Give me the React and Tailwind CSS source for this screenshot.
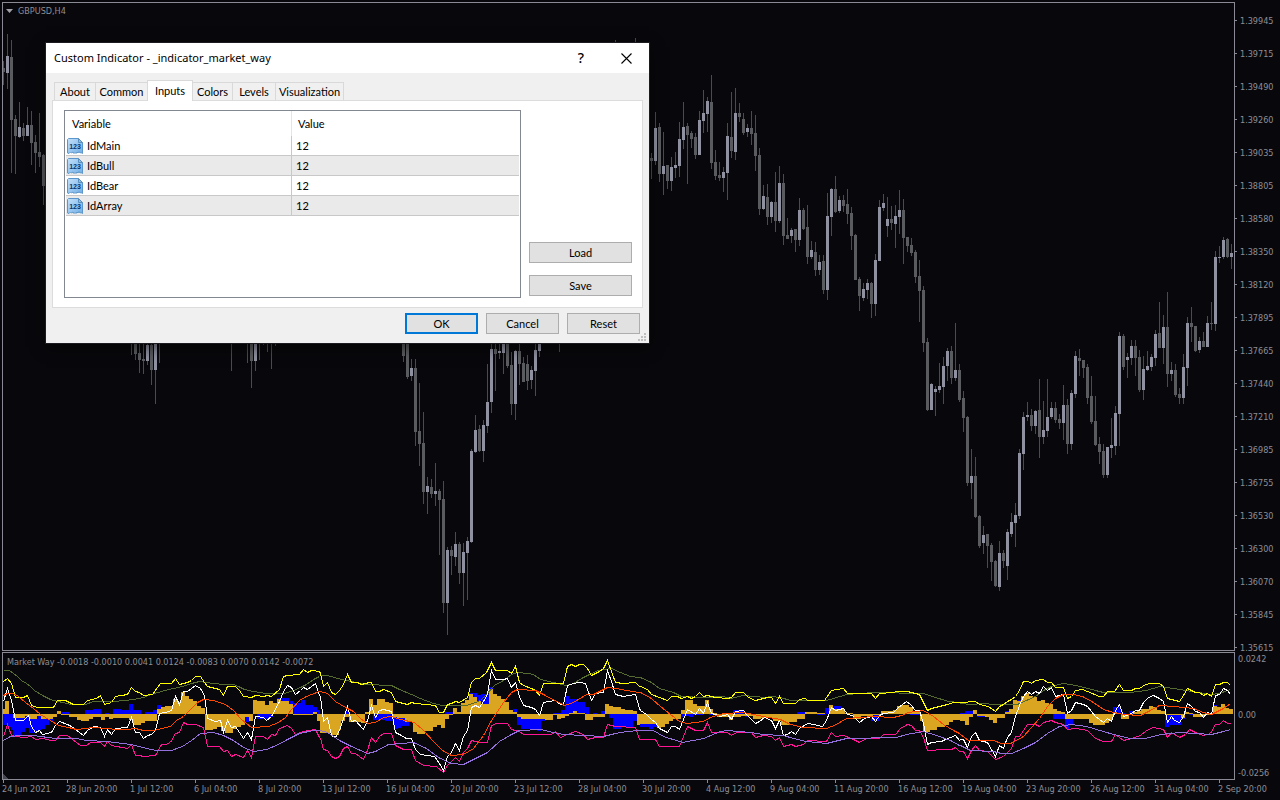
import React from "react";

/* ---------- price candles: "wickTop wickBottom bodyTop bodyBottom direction" ---------- */

const CANDLE_RUNS = [
  [0, "61 85 68 72 d,34 89 56 73 u,40 173 57 120 d,115 174 119 136 d,102 138 127 137 u,123 141 128 136 d,107 136 125 136 u,111 165 125 143 d,135 173 142 153 d,113 167 152 157 d,154 205 155 186 d"],
  [32, "320 355 320 330 d,320 360 330 354 d,340 373 353 360 d,340 374 359 361 d,330 365 345 361 u,330 385 345 370 d,330 404 340 370 u,330 363 330 340 u"],
  [57, "330 371 330 340 d"],
  [61, "330 363 330 340 d,330 388 330 361 d,330 371 335 361 u,335 360 335 344 d,330 345 330 340 d,330 352 330 340 d,330 369 330 340 d,330 346 330 340 d"],
  [100, "330 362 330 356 d,335 379 335 377 d,359 381 368 376 u,359 446 368 432 d,383 466 431 444 d,412 504 443 492 d,477 514 486 492 u,479 498 487 494 d,463 506 491 494 u,489 555 491 500 d,481 613 499 603 d,547 635 550 603 u,546 575 550 556 d,532 566 544 557 u,542 584 544 573 d,543 606 552 573 u,537 600 541 553 u,449 543 451 542 u,415 453 430 452 u,425 452 429 451 d,420 462 425 451 u,364 433 402 426 u,335 413 349 402 u,335 391 349 354 d,335 359 351 353 u,335 374 335 353 u,335 368 335 366 d,352 415 365 404 d,350 420 351 404 u,335 385 351 364 d,357 382 363 382 d,355 390 364 381 d,366 389 370 380 u,335 396 350 371 u,330 357 330 351 u"],
  [139, "330 352 330 340 d"],
  [153, "40 60 50 60 d"],
  [158, "38 60 50 60 d"],
  [162, "153 179 158 161 d,112 165 128 161 u,123 182 127 174 d,132 195 166 174 u,165 189 165 181 d,157 191 167 181 u,152 178 165 168 u,122 177 139 166 u,102 149 127 140 u,123 184 126 135 d,131 148 133 139 d,133 159 137 155 d,111 155 120 155 u,90 133 113 121 u,97 132 101 114 u,75 169 102 163 d,150 180 162 176 d,162 181 175 178 d,167 192 172 178 u,123 200 136 173 u,92 158 137 151 d,88 160 113 152 u,103 122 113 117 d,113 135 119 133 d,124 137 128 132 u,111 145 128 134 d,115 171 133 156 d,148 215 155 209 d,185 210 196 209 u,184 225 197 217 d,201 223 202 217 u,172 232 202 221 d,166 223 183 221 u,174 245 183 236 d,218 239 235 239 d,228 243 230 236 u,229 252 229 240 d,198 246 210 240 u,208 230 210 229 d,205 264 227 257 d,241 259 250 257 u,242 276 252 270 d,255 275 262 270 u,255 294 261 290 d,193 300 216 290 u,188 236 189 217 u,176 213 189 212 d,196 213 200 211 u,195 212 200 206 d,189 224 204 214 d,207 250 213 236 d,234 280 235 280 d,277 311 279 296 d,283 301 289 298 u,279 299 283 290 u,282 318 283 304 d,254 316 260 304 u,200 261 207 261 u,194 211 203 208 u,197 237 219 226 u,206 230 219 223 d,205 248 216 224 u,190 234 210 217 u,199 264 210 238 d,237 252 237 246 d,238 256 245 253 d,250 283 252 277 d,260 322 276 291 d"],
  [230, "286 352 290 343 d,338 411 342 410 d,383 410 384 410 u,386 416 389 392 u,363 393 386 390 u,357 404 366 387 u,348 381 351 366 u,346 384 351 378 d,323 381 370 378 u,364 402 370 400 d,391 432 398 418 d,416 486 417 483 d,449 499 476 483 u,457 518 476 517 d,515 548 516 546 d,526 554 535 543 u,534 568 534 546 d,543 581 545 562 d,560 587 561 586 d,541 591 553 587 u,550 568 553 561 d,529 580 532 566 u,513 537 522 534 u,503 547 515 523 u,449 519 453 516 u,412 470 417 454 u,402 421 415 417 u,409 431 415 426 d,410 434 411 426 u,379 458 410 437 d,401 444 430 437 u,379 437 417 431 u,402 419 408 417 u,402 423 408 420 d,414 429 419 423 d,385 440 405 423 u,399 454 405 444 d,390 450 393 444 u,351 398 356 394 u,349 376 358 361 d,360 378 360 368 d,364 404 367 398 d,376 424 396 422 d,396 446 421 445 d,437 464 444 452 d,444 478 451 475 d,447 478 447 475 u,418 458 445 448 u,406 455 413 446 u,332 446 336 414 u,334 370 336 367 d,353 378 357 360 u,340 365 346 358 u,340 376 346 358 d,350 392 357 390 d,356 400 369 390 u,351 371 366 370 u,354 371 357 367 u,330 366 334 358 u,302 348 333 348 d,315 364 327 348 u,292 387 327 374 d,362 381 370 374 u,364 397 370 395 d,388 404 394 398 d,354 404 367 398 u,317 386 323 368 u,307 342 323 327 d,326 352 326 351 d,337 353 341 350 u,332 347 341 347 d,316 347 323 347 u,302 330 323 324 d,251 331 257 324 u,246 263 257 258 u,237 259 240 257 u,238 258 239 257 d,244 269 253 257 u"],
];

const CANDLES = CANDLE_RUNS.flatMap(([start, run]) =>
  run.split(",").map((row, n) => {
    const [wt, wb, bt, bb, dir] = row.split(" ");
    return { x: 3 + 4 * (start + n), wt: +wt, wb: +wb, bt: +bt, bb: +bb, up: dir === "u" };
  })
);

/* ---------- oscillator: four 320-unit tiles, stored at three steps per unit ---------- */

const TOP = 650;

const LINES = [
  {
    color: "#556b2f",
    tiles: [
      "10,61 28,62 40,70 52,80 64,92 78,99 90,108 104,122 126,135 150,147 172,155 190,158 210,162 256,162 280,155 300,154 340,155 376,152 400,148 430,141 444,136 462,130 484,124 506,118 520,115 546,110 574,101 598,94 640,99 670,102 700,104 716,110 734,117 760,124 800,130 852,130 880,120 900,113 920,104 940,88 958,80",
      "0,76 22,76 64,88 110,97 140,103 214,106 238,118 274,132 300,145 340,160 366,166 440,166 466,158 480,150 500,134 524,106 550,92 574,74 592,67 622,70 640,74 662,88 700,98 740,106 760,100 784,86 808,72 836,62 874,54 900,66 930,78 958,83",
      "0,82 34,98 58,116 100,126 124,138 190,142 250,140 270,144 310,136 376,142 394,139 420,143 452,152 560,152 580,145 620,132 700,128 850,130 876,140 924,153 958,158",
      "0,160 30,163 72,160 100,164 172,162 200,152 226,138 250,122 274,110 296,102 314,100 346,106 384,114 406,121 430,127 510,127 560,120 598,110 640,116 676,122 754,134 778,130 811,118",
    ],
  },
  {
    color: "#ffff00",
    tiles: [
      "10,94 22,85 34,100 46,141 70,143 82,136 94,166 112,172 160,171 172,152 196,152 220,162 250,163 262,150 288,146 300,137 312,163 334,158 346,140 382,134 394,112 406,123 418,127 430,137 458,132 480,101 514,101 526,86 538,104 562,98 574,90 586,79 600,80 612,98 622,110 658,118 670,136 682,110 706,109 718,122 730,138 754,142 766,136 790,140 802,136 814,138 838,118 850,80 862,76 898,74 910,59 922,67 934,62 958,63",
      "0,70 10,108 22,98 34,126 46,133 58,122 70,104 82,74 94,98 112,96 124,103 148,98 154,98 166,123 178,124 190,118 214,128 226,155 250,160 262,164 274,156 286,161 346,166 358,186 370,186 382,164 394,160 406,154 418,157 442,142 454,96 466,85 478,84 500,66 514,36 526,60 562,61 574,70 586,48 598,96 610,106 634,114 646,120 658,136 670,101 730,99 742,48 754,44 766,48 778,44 790,44 802,54 814,76 838,64 850,54 862,30 874,64 886,98 910,100 946,97 958,108",
      "0,108 22,118 34,134 58,142 82,150 94,140 112,139 124,146 142,138 154,144 166,140 178,128 190,140 202,136 226,142 262,144 274,142 286,127 310,127 326,142 346,151 382,143 394,142 406,160 418,140 430,160 466,160 478,148 496,144 502,150 552,150 574,120 610,115 622,130 694,131 706,145 718,130 756,128 772,124 802,124 838,133 862,180 874,174 898,168 922,162 940,158 958,157",
      "0,158 46,154 58,162 84,168 106,184 118,168 130,164 142,155 154,148 166,140 178,120 190,94 206,93 214,100 226,92 250,89 262,97 274,96 286,112 310,112 322,145 334,140 346,120 366,118 382,125 418,138 430,139 442,124 464,124 478,104 490,122 514,120 526,115 538,116 556,104 574,100 598,101 610,110 622,146 658,153 670,136 682,116 706,126 718,128 730,136 742,130 754,138 766,104 778,104 790,97 802,98 811,106",
    ],
  },
  {
    color: "#ff1493",
    tiles: [
      "10,260 22,222 34,255 46,260 72,262 94,260 106,268 128,266 154,270 166,270 178,257 202,257 216,268 240,286 260,287 270,276 300,276 312,290 322,274 334,286 382,295 394,284 406,317 418,316 430,320 466,316 484,284 496,284 512,276 526,250 538,248 550,217 562,223 586,222 610,232 622,288 658,290 670,304 682,302 694,318 706,312 730,322 742,302 754,322 766,260 790,260 802,268 814,254 826,255 838,236 862,226 874,234 886,254 910,244 946,238 958,262",
      "0,265 10,298 22,300 34,320 46,325 58,320 70,295 82,288 94,309 106,309 130,327 142,300 154,262 166,276 178,258 190,251 214,250 226,286 250,297 274,298 286,330 310,346 350,348 370,368 382,345 406,322 418,334 430,308 442,296 454,272 478,277 502,276 514,225 530,221 562,221 574,238 598,244 610,253 694,254 706,243 720,262 742,252 766,243 790,254 802,268 826,262 850,262 862,222 886,228 946,232 958,268",
      "0,268 46,268 58,289 118,288 130,260 142,229 166,240 190,240 202,218 214,246 262,248 274,255 290,248 334,248 346,262 370,256 394,258 406,270 418,262 430,290 454,284 466,290 490,282 502,272 560,274 574,248 586,260 610,256 634,264 658,278 680,266 718,264 730,254 766,254 780,236 802,222 814,226 826,240 838,240 850,262 862,300 916,298 934,298 946,292 958,304",
      "0,303 10,303 22,326 34,302 46,287 58,302 82,304 106,327 130,318 154,296 166,260 178,258 202,224 226,224 238,230 250,217 274,211 286,217 310,222 322,238 346,236 382,240 406,265 430,274 454,274 466,252 490,271 514,266 540,256 560,240 580,232 610,239 622,262 634,248 658,262 676,252 688,238 706,246 730,255 752,250 766,224 778,222 790,212 802,220 811,220",
    ],
  },
  {
    color: "#ffffff",
    tiles: [
      "10,155 22,116 34,150 46,210 70,211 84,197 94,230 106,247 118,240 128,252 154,246 166,225 178,215 202,224 214,228 226,237 250,256 262,240 284,230 300,232 312,259 322,238 334,252 346,236 382,233 394,202 406,246 418,246 430,264 442,255 454,252 466,240 478,190 496,187 514,182 526,140 538,163 550,125 562,125 586,107 600,116 612,135 622,206 646,214 660,210 670,248 682,212 694,232 706,228 730,264 742,248 754,268 766,198 790,203 800,212 814,200 838,155 850,125 862,105 874,112 886,133 900,122 910,112 922,118 946,101 958,135",
      "0,140 10,215 22,203 34,255 46,262 58,242 82,170 94,213 106,212 130,238 142,212 154,166 166,202 178,182 190,178 214,184 226,246 238,253 260,266 274,264 286,298 300,312 344,320 358,340 370,360 382,320 394,306 406,280 418,300 430,260 442,242 454,172 466,165 478,171 490,155 502,132 514,62 526,88 550,88 562,84 574,112 586,97 598,140 610,166 634,172 646,177 658,196 670,158 706,152 720,162 730,162 742,107 760,100 778,97 796,99 814,150 826,130 850,126 862,60 874,95 886,132 910,138 946,134 958,176",
      "0,182 20,192 34,208 46,216 58,235 82,246 94,230 106,229 118,238 130,208 142,178 166,192 178,176 190,190 202,156 214,191 226,192 240,200 262,194 274,208 286,184 310,181 322,196 346,219 358,214 374,202 394,210 406,236 418,210 430,256 442,254 454,244 466,254 478,236 502,220 520,222 546,230 560,210 574,172 586,180 610,174 622,192 636,196 658,216 674,205 694,200 706,215 718,196 730,190 760,188 776,172 800,153 812,162 826,180 838,182 850,220 862,284 874,278 904,273 916,268 946,256 958,270",
      "0,268 10,268 22,292 34,260 46,246 58,272 82,276 106,318 118,286 130,294 142,262 154,246 166,200 178,165 190,140 202,124 214,132 226,124 238,129 250,109 262,120 274,113 286,138 310,134 322,190 334,180 346,158 370,163 382,170 406,200 430,218 442,206 454,214 466,180 478,164 490,200 514,190 526,180 538,182 550,158 566,142 580,135 598,146 610,155 622,216 634,200 644,210 658,218 670,200 682,160 694,170 706,184 718,186 730,202 742,186 754,194 766,136 778,134 790,114 802,120 811,134",
    ],
  },
  {
    color: "#ff4500",
    tiles: [
      "10,136 22,130 40,130 54,140 76,156 100,176 120,192 150,212 176,227 206,233 230,238 280,232 320,236 350,239 380,238 406,234 430,240 464,241 484,234 510,228 530,212 550,198 574,175 592,158 610,148 640,151 676,164 700,182 724,208 754,232 806,230 836,218 856,202 874,178 898,152 920,140 958,125",
      "0,124 22,130 46,154 76,172 100,184 122,206 142,220 166,216 190,202 214,198 240,207 282,218 310,242 340,274 366,300 394,315 430,314 460,294 490,256 514,212 550,158 574,128 592,118 646,120 670,134 734,166 760,158 800,134 820,132 862,112 890,115 920,122 958,128",
      "0,128 34,146 60,170 90,194 118,214 140,220 190,214 210,202 250,190 310,188 370,198 420,208 452,224 490,232 560,236 590,222 620,205 700,200 760,202 784,195 806,186 850,182 880,200 910,222 940,242 958,251",
      "0,254 24,270 100,270 124,280 150,279 190,258 214,232 238,204 262,170 286,145 310,134 340,133 366,138 400,158 430,178 460,188 490,192 540,196 570,180 598,167 640,170 700,175 730,188 754,192 790,176 811,160",
    ],
  },
  {
    color: "#9370db",
    tiles: [
      "10,271 30,260 60,256 100,257 166,265 230,265 260,270 320,273 370,280 406,285 440,294 470,302 514,301 546,290 574,270 600,249 640,246 670,256 700,272 730,292 760,303 800,298 836,284 862,268 898,250 940,242 958,241",
      "0,240 22,246 58,272 94,288 142,310 166,305 206,284 280,278 320,296 356,322 394,340 430,344 460,328 502,306 538,274 574,252 598,240 660,238 700,248 730,253 850,259 886,250 920,245 958,241",
      "0,241 40,242 70,258 126,277 190,265 240,245 262,241 330,246 366,253 430,256 460,266 500,275 560,280 620,265 770,262 800,252 850,243 890,256 930,270 958,287",
      "0,286 30,300 100,304 124,310 154,310 190,296 226,276 262,250 298,230 334,222 380,228 430,244 460,254 510,265 556,264 600,252 660,247 754,252 790,243 811,238",
    ],
  },
];

/* histogram steps: "from-to:level" */
const BLUE = [
  "10-22:225 22-34:230 34-40:240 40-64:258 64-76:246 76-88:235 88-112:250 112-124:240 124-136:236 136-148:226 148-160:212 184-208:186 256-280:180 280-304:178 316-328:188 340-364:178 364-388:180 388-400:162 400-424:180 436-448:187 448-460:186 460-472:180 472-484:166 484-496:172 736-748:216 772-808:206 808-820:200 832-868:144 868-880:152 880-904:158 904-916:150 916-928:164 928-940:166 940-952:172 952-960:180",
  "76-88:180 160-196:210 196-220:214 220-232:238 232-244:234 244-268:228 376-400:186 448-472:129 472-484:136 484-508:131 508-520:112 580-592:178 592-604:224 604-652:238 652-664:244 664-676:212 700-712:188 712-724:190 724-736:180 736-748:137 748-772:148 772-796:155 796-808:172 820-832:189 844-856:183 868-880:204 880-904:238 904-916:230 916-940:232 940-952:212",
  "0-28:232 28-40:237 40-52:232 124-136:202 136-148:198 148-160:200 160-190:195 208-232:195 280-310:180 316-328:202 352-364:206 400-412:212 472-508:186 532-556:195 556-568:174 568-580:175 580-604:168 604-616:176 628-640:188 694-718:212 748-784:190 810-840:196",
  "0-16:188 16-40:184 52-76:200 136-148:184 160-184:150 280-316:208 316-328:236 328-340:222 460-484:170 484-496:188 508-520:183 616-628:230 628-640:224 640-664:226 664-676:208 688-700:194 748-760:196 760-772:165",
];
const GOLD = [
  "10-16:178 16-28:152 40-76:204 76-88:198 88-112:206 112-124:198 124-160:206 160-172:200 172-184:183 184-208:195 208-232:202 232-244:210 244-268:213 268-280:206 280-304:200 304-316:210 316-328:200 328-340:206 340-388:204 388-400:210 400-424:226 424-436:218 436-472:212 472-484:176 484-496:172 496-520:168 520-532:148 532-544:156 544-556:126 556-568:138 568-580:146 580-592:154 592-604:168 604-616:174 616-640:240 640-652:236 652-664:232 664-676:244 676-700:248 700-712:238 712-724:232 724-736:224 736-748:202 748-760:214 760-772:150 772-796:154 796-808:164 808-820:152 820-832:158 832-844:148 844-868:152 868-880:163 880-904:195 904-940:195 940-952:187 952-960:213",
  "0-34:250 34-58:255 58-64:240 64-76:214 76-88:200 88-124:216 124-136:218 136-148:187 148-160:147 160-172:165 172-196:148 196-208:155 208-220:160 220-232:200 232-256:204 256-280:216 280-292:245 292-316:251 316-340:244 340-352:230 352-364:226 364-376:235 376-388:208 388-400:196 400-412:175 412-424:187 424-436:160 436-448:150 448-460:133 460-472:140 472-484:152 484-508:162 508-520:118 520-532:133 532-544:138 544-556:147 556-568:155 568-580:180 580-592:187 592-604:200 604-628:206 628-652:208 652-676:206 676-700:210 700-712:194 712-724:206 724-736:204 736-748:199 748-760:189 760-772:183 772-796:189 796-820:210 820-844:200 844-856:200 856-868:162 868-880:167 880-904:172 904-916:178 916-940:180 940-952:183 952-960:225",
  "0-50:222 50-64:234 64-76:232 76-88:222 88-100:214 100-124:206 124-136:180 136-160:150 160-172:163 172-196:168 196-208:150 208-220:178 220-232:189 232-268:200 268-280:210 280-304:202 304-340:198 340-364:208 364-400:205 400-424:212 424-448:224 448-472:216 472-496:206 496-532:187 532-556:188 568-580:165 580-592:176 592-616:178 616-640:189 640-664:206 664-700:198 700-724:195 724-760:183 760-772:180 772-784:168 784-808:165 808-820:172 820-840:184 840-850:214 850-870:246 870-892:240 892-916:232 916-928:224 928-940:216 940-960:210",
  "0-16:212 16-28:224 28-40:200 40-52:180 52-76:197 76-88:202 88-100:210 100-112:218 112-136:204 136-148:187 148-160:178 160-172:151 172-184:154 184-196:138 196-208:128 208-220:138 220-232:142 232-244:154 244-256:150 256-268:158 268-280:163 280-292:178 292-304:184 304-316:187 316-340:208 340-388:206 388-400:218 400-436:224 436-448:218 448-460:210 460-472:186 472-484:189 484-508:206 508-520:195 520-532:186 532-544:182 544-568:176 568-580:168 580-592:172 592-604:180 604-616:184 616-664:196 664-676:204 676-688:187 688-700:188 700-724:200 724-736:202 736-760:195 760-772:168 772-784:171 784-796:162 796-808:174 808-819:178",
];

const toPath = (tiles) =>
  tiles
    .flatMap((tile, k) =>
      tile.split(" ").map((p) => {
        const [x, y] = p.split(",").map(Number);
        return `${Math.floor(320 * k + x / 3) + 0.5},${Math.floor(TOP + y / 3) + 0.5}`;
      })
    )
    .join(" ");

const toBars = (tiles) =>
  tiles.flatMap((tile, k) =>
    tile.split(" ").map((step) => {
      const [range, level] = step.split(":");
      const [a, b] = range.split("-").map(Number);
      const x1 = Math.round(320 * k + a / 3);
      const x2 = Math.round(320 * k + b / 3);
      const y = Math.round(TOP + level / 3);
      const zero = 714;
      return { x: x1, w: x2 - x1, y: Math.min(y, zero), h: Math.max(1, Math.abs(y - zero)) };
    })
  );

const BLUE_BARS = toBars(BLUE);
const GOLD_BARS = toBars(GOLD);

const PRICES = [
  "1.39945", "1.39715", "1.39490", "1.39260", "1.39035", "1.38805", "1.38580",
  "1.38350", "1.38120", "1.37895", "1.37665", "1.37440", "1.37210", "1.36985",
  "1.36755", "1.36530", "1.36300", "1.36070", "1.35845", "1.35615",
];

const TIMES = [
  "24 Jun 2021", "28 Jun 20:00", "1 Jul 12:00", "6 Jul 04:00", "8 Jul 20:00",
  "13 Jul 12:00", "16 Jul 04:00", "20 Jul 20:00", "23 Jul 12:00", "28 Jul 04:00",
  "30 Jul 20:00", "4 Aug 12:00", "9 Aug 04:00", "11 Aug 20:00", "16 Aug 12:00",
  "19 Aug 04:00", "23 Aug 20:00", "26 Aug 12:00", "31 Aug 04:00", "2 Sep 20:00",
];

const INPUTS = [
  ["IdMain", "12"],
  ["IdBull", "12"],
  ["IdBear", "12"],
  ["IdArray", "12"],
];

function PriceChart() {
  return (
    <section className="relative mb-px min-h-0 min-w-0 border border-[#8a8a94]">
      <svg
        className="absolute inset-0 h-full w-full"
        viewBox="3 3 1231 647"
        preserveAspectRatio="none"
        shapeRendering="crispEdges"
        aria-hidden="true"
      >
        {CANDLES.map((c) => (
          <g key={c.x}>
            <rect x={c.x} y={c.wt} width="1" height={c.wb - c.wt} fill="#4a4b4e" />
            <rect x={c.x - 1} y={c.bt} width="3" height={c.bb - c.bt} fill={c.up ? "#8f90a0" : "#5a5b5e"} />
          </g>
        ))}
      </svg>
      <h1 className="relative flex h-[15px] items-center gap-[5px] pl-[3px]">
        <svg className="h-1 w-[7px]" viewBox="0 0 7 4" aria-hidden="true">
          <path d="M0 0h7L3.5 4z" fill="#a0a0a8" />
        </svg>
        GBPUSD,H4
      </h1>
    </section>
  );
}

function PriceAxis() {
  return (
    <ol className="min-h-0 pt-0.5">
      {PRICES.map((p) => (
        <li key={p} className="flex h-[33px] items-center gap-[3px]">
          <span className="h-px w-0.5 bg-[#8a8a94]" />
          {p}
        </li>
      ))}
    </ol>
  );
}

function Oscillator() {
  return (
    <section className="relative min-w-0 border border-[#8a8a94]">
      <svg
        className="absolute inset-0 h-full w-full"
        viewBox="3 653 1231 126"
        preserveAspectRatio="none"
        shapeRendering="crispEdges"
        aria-hidden="true"
      >
        {BLUE_BARS.map((b) => (
          <rect key={b.x} x={b.x} y={b.y} width={b.w} height={b.h} fill="#0000ff" />
        ))}
        {GOLD_BARS.map((b) => (
          <rect key={b.x} x={b.x} y={b.y} width={b.w} height={b.h} fill="#daa520" />
        ))}
        {LINES.map((l) => (
          <polyline key={l.color} points={toPath(l.tiles)} fill="none" stroke={l.color} strokeWidth="1" />
        ))}
        <path d="M3 774v5h5z" fill="#45454f" />
      </svg>
      <h2 className="relative flex h-[17px] items-center whitespace-nowrap pl-1">
        Market Way -0.0018 -0.0010 0.0041 0.0124 -0.0083 0.0070 0.0142 -0.0072
      </h2>
    </section>
  );
}

function OscillatorAxis() {
  return (
    <div className="flex flex-col justify-between pl-[3px]">
      <span className="leading-[14px]">0.0242</span>
      <span className="mb-0.5 leading-[14px]">0.00</span>
      <span className="leading-[14px]">-0.0256</span>
    </div>
  );
}

function TimeAxis() {
  return (
    <ol className="col-span-2 flex min-w-0">
      {TIMES.map((t) => (
        <li key={t} className="w-16 shrink-0 whitespace-nowrap">
          <span className="ml-px block h-[3px] w-px bg-[#8a8a94]" />
          <span className="block leading-3">{t}</span>
        </li>
      ))}
    </ol>
  );
}

function NumberIcon() {
  return (
    <svg className="h-4 w-4 shrink-0" viewBox="0 0 16 16" aria-hidden="true">
      <defs>
        <linearGradient id="sheet" x1="0" y1="0" x2="1" y2="1">
          <stop offset="0" stopColor="#c3e1fb" />
          <stop offset="1" stopColor="#6fade6" />
        </linearGradient>
      </defs>
      <path
        d="M1.5.5h10l4 4v11l-1.5-1-1 .5-1-1.5-1 1.5-1-1-1 1.5-1-1-1 1-1-1.5-1.5 1-1-1-1.5 1.500-1.500-.500V1.500z"
        fill="url(#sheet)"
        stroke="#5c97cc"
      />
      <path d="M11.500.500v4h4z" fill="#8dbde8" stroke="#5c8fbd" />
      <text x="8" y="10.500" textAnchor="middle" fontSize="7" fontWeight="700" fontFamily="Liberation Sans, sans-serif" fill="#0b3567">
        123
      </text>
    </svg>
  );
}

function Tab({ label, className, active }) {
  return (
    <button
      type="button"
      role="tab"
      aria-selected={!!active}
      className={
        (active
          ? "relative z-10 -mb-px h-[21px] border-x border-t border-[#d9d9d9] bg-white pb-px "
          : "h-[18px] border-r border-t border-[#d9d9d9] bg-[#f0f0f0] ") + className
      }
    >
      {label}
    </button>
  );
}

function DialogButton({ children, className = "", primary }) {
  return (
    <button
      type="button"
      className={
        (primary ? "border-2 border-[#0078d7] " : "border border-[#adadad] ") +
        "flex h-[21px] items-center justify-center bg-[#e1e1e1] " +
        className
      }
    >
      {children}
    </button>
  );
}

function IndicatorDialog() {
  return (
    <div
      role="dialog"
      aria-labelledby="dialog-title"
      className="absolute left-[46px] top-[43px] w-[603px] bg-[#f0f0f0] font-['Lato','Liberation_Sans',sans-serif] text-[11px] leading-4 text-black shadow-[0_0_0_1px_#1c1c20,0_4px_14px_rgba(0,0,0,0.6)]"
    >
      <header className="flex h-[30px] items-center bg-white pl-2 pr-[17px]">
        <h2 id="dialog-title" className="flex-1 font-['Noto_Sans',sans-serif] text-[11px]">
          Custom Indicator - _indicator_market_way
        </h2>
        <button type="button" aria-label="Help" className="mr-9 font-['Noto_Sans',sans-serif] text-sm font-medium">
          ?
        </button>
        <button type="button" aria-label="Close" className="flex h-3 w-3 items-center justify-center">
          <svg className="h-[11px] w-[11px]" viewBox="0 0 11 11" aria-hidden="true">
            <path d="M.5.5l10 10M10.500.500l-10 10" stroke="#000" strokeWidth="1.100" />
          </svg>
        </button>
      </header>

      <div className="px-[6px] pt-[7px]">
        <div role="tablist" className="flex items-end pl-0.5">
          <Tab label="About" className="w-[42px] border-l" />
          <Tab label="Common" className="w-[51px] border-r-0" />
          <Tab label="Inputs" className="w-[46px]" active />
          <Tab label="Colors" className="w-[40px]" />
          <Tab label="Levels" className="w-[43px]" />
          <Tab label="Visualization" className="w-[68px]" />
        </div>

        <div role="tabpanel" className="flex gap-2 border border-[#dcdcdc] bg-white pb-[9px] pl-[11px] pr-[10px] pt-[9px]">
          <div className="h-[188px] flex-1 border border-[#828790] px-px">
            <table className="w-full table-fixed border-separate border-spacing-0 text-left">
              <thead>
                <tr className="h-[25px]">
                  <th className="w-[226px] border-r border-[#e5e5e5] p-0 pl-1.5 font-normal">Variable</th>
                  <th className="p-0 pl-1.5 font-normal">Value</th>
                </tr>
              </thead>
              <tbody>
                {INPUTS.map(([name, value]) => (
                  <tr key={name} className="h-5 even:bg-[#eaeaea]">
                    <td className="border-b border-r border-[#c8c8c8] p-0 pl-px">
                      <div className="flex items-center gap-1">
                        <NumberIcon />
                        {name}
                      </div>
                    </td>
                    <td className="border-b border-[#c8c8c8] p-0 pl-1">{value}</td>
                  </tr>
                ))}
              </tbody>
            </table>
          </div>
          <div className="flex w-[103px] flex-col justify-end gap-3 pb-0.5">
            <DialogButton>Load</DialogButton>
            <DialogButton>Save</DialogButton>
          </div>
        </div>
      </div>

      <footer className="relative flex justify-end gap-2 pb-[9px] pr-[9px] pt-[5px]">
        <DialogButton primary className="w-[73px]">OK</DialogButton>
        <DialogButton className="w-[73px]">Cancel</DialogButton>
        <DialogButton className="w-[73px]">Reset</DialogButton>
        <svg className="absolute bottom-0.5 right-[3px] h-2 w-2" viewBox="0 0 8 8" aria-hidden="true">
          <path d="M6 0h2v2H6zM3 3h2v2H3zM6 3h2v2H6zM0 6h2v2H0zM3 6h2v2H3zM6 6h2v2H6z" fill="#bfbfbf" />
        </svg>
      </footer>
    </div>
  );
}

export default function App() {
  return (
    <main className="relative grid h-screen grid-cols-[1fr_45px] grid-rows-[1fr_128px_20px] overflow-hidden bg-[#08080c] pl-0.5 pt-0.5 font-['DejaVu_Sans_Condensed','DejaVu_Sans',sans-serif] text-[9px] leading-3 text-[#8e8e94]">
      <PriceChart />
      <PriceAxis />
      <Oscillator />
      <OscillatorAxis />
      <TimeAxis />
      <IndicatorDialog />
    </main>
  );
}
